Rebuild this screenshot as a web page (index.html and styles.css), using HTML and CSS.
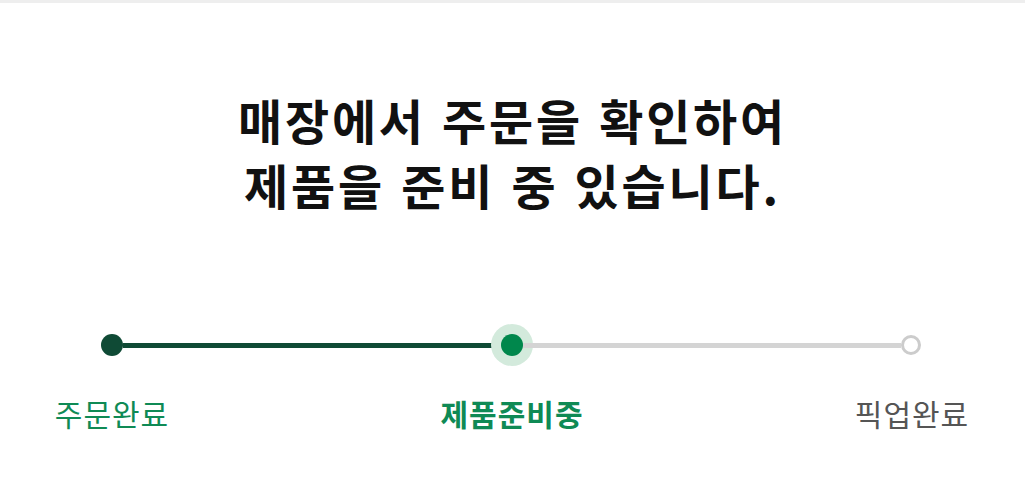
FILE: index.html
```html
<!DOCTYPE html>
<html lang="ko">
<head>
  <meta charset="UTF-8" />
  <meta name="viewport" content="width=device-width, initial-scale=1.0"/>
  <title>주문 상태</title>
  <link rel="stylesheet" href="styles.css">
</head>
<body>

  <div class="order-status">
    <!-- Status message -->
    <h1 class="status-title">매장에서 주문을 확인하여<br>제품을 준비 중 있습니다.</h1>

    <!-- Progress steps -->
    <div class="steps">
      <span class="dot done"></span>
      <span class="track done"></span>
      <span class="dot current"></span>
      <span class="track"></span>
      <span class="dot todo"></span>
    </div>

    <div class="step-labels">
      <span class="label done">주문완료</span>
      <span class="label current">제품준비중</span>
      <span class="label todo">픽업완료</span>
    </div>
  </div>

</body>
</html>
```

FILE: styles.css
```css
* { margin: 0; padding: 0; box-sizing: border-box; }
body {
  font-family: "Noto Sans CJK KR", "Noto Sans", sans-serif;
  background-color: #fff;
  border-top: 3px solid #eeeeee;
}

.order-status {
  padding-top: 84px;
}

.status-title {
  text-align: center;
  font-size: 48px;
  font-weight: bold;
  letter-spacing: 2.8px;
  line-height: 65px;
  color: #111;
}

.steps {
  display: flex;
  align-items: center;
  height: 44px;
  margin-top: 106px;
  padding: 0 104px 0 101px;
}

.dot {
  width: 22px;
  height: 22px;
  border-radius: 50%;
  flex-shrink: 0;
}
.dot.done { background-color: #0f4a35; }
.dot.current {
  background-color: #00874c;
  box-shadow: 0 0 0 10px #d3eadc;
}
.dot.todo {
  width: 20px;
  height: 20px;
  background-color: #fff;
  border: 3px solid #cccccc;
}

.track {
  flex: 1;
  height: 5px;
  background-color: #d4d4d4;
}
.track.done { background-color: #0f4a35; }

.step-labels {
  display: flex;
  justify-content: space-between;
  margin-top: 24px;
  padding: 0 13px 0 12px;
}

.label {
  width: 200px;
  text-align: center;
  font-size: 30px;
  letter-spacing: 1px;
  color: #0f8a55;
}
.label.current { font-weight: bold; }
.label.todo { color: #555; }
```
